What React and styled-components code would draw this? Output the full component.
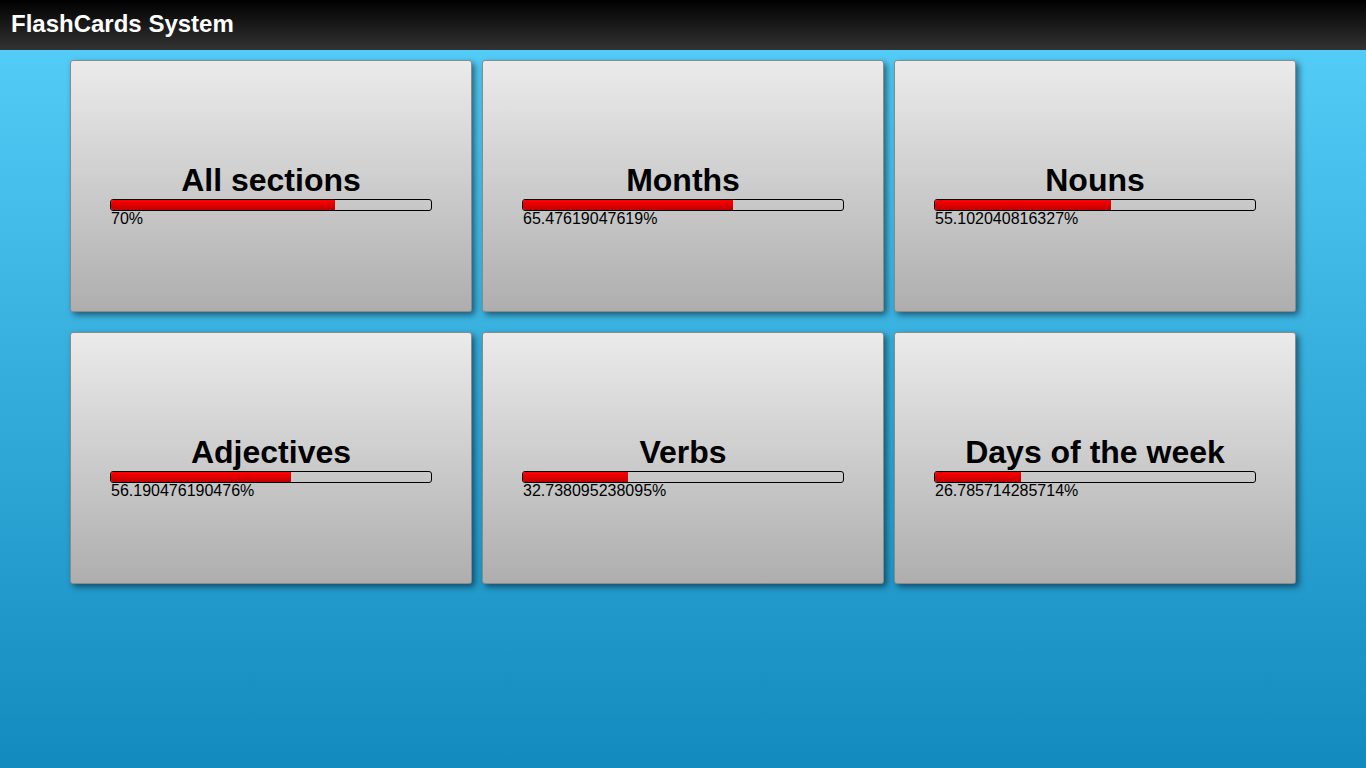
import React from "react";
import styled, { createGlobalStyle } from "styled-components";

const GlobalStyle = createGlobalStyle`
  html, body {
    margin: 0;
    padding: 0;
    height: 100%;
  }
  body {
    font-family: "Liberation Sans", Arial, sans-serif;
    background: linear-gradient(to bottom, #57d0fb 0%, #138abd 100%);
    min-height: 768px;
  }
`;

const Page = styled.div`
  min-height: 768px;
  display: flex;
  flex-direction: column;
`;

const Header = styled.header`
  height: 50px;
  background: linear-gradient(to bottom, #000000 0%, #333333 100%);
  display: flex;
  align-items: center;
  padding: 0 11px;
`;

const Title = styled.h1`
  margin: 0;
  color: #ffffff;
  font-size: 24px;
  font-weight: bold;
  font-family: "Liberation Sans", Arial, sans-serif;
  line-height: 1;
  padding-bottom: 2px;
`;

const Grid = styled.main`
  display: grid;
  grid-template-columns: repeat(3, 402px);
  column-gap: 10px;
  row-gap: 20px;
  justify-content: center;
  padding-top: 10px;
`;

const Card = styled.div`
  box-sizing: border-box;
  height: 252px;
  border: 1px solid #8a8a8a;
  border-radius: 3px;
  background: linear-gradient(to bottom, #ebebeb 0%, #aeaeae 100%);
  box-shadow: 3px 3px 6px rgba(0, 0, 0, 0.5);
  display: flex;
  flex-direction: column;
  align-items: center;
  padding-top: 101px;
  cursor: pointer;
`;

const CardTitle = styled.h2`
  margin: 0;
  font-size: 32px;
  font-weight: bold;
  line-height: 37px;
  color: #000;
  text-align: center;
`;

const Progress = styled.div`
  width: 320px;
  display: flex;
  flex-direction: column;
`;

const Bar = styled.div`
  box-sizing: border-box;
  width: 322px;
  margin-left: -1px;
  height: 12px;
  border: 1px solid #000;
  border-radius: 3px;
  overflow: hidden;
`;

const Fill = styled.div`
  height: 100%;
  background: linear-gradient(to bottom, #ff0000 0%, #c00000 100%);
`;

const Percent = styled.div`
  font-size: 16px;
  line-height: 16px;
  color: #000;
`;

const sections = [
  { name: "All sections", value: "70" },
  { name: "Months", value: "65.47619047619" },
  { name: "Nouns", value: "55.102040816327" },
  { name: "Adjectives", value: "56.190476190476" },
  { name: "Verbs", value: "32.738095238095" },
  { name: "Days of the week", value: "26.785714285714" },
];

export default function App() {
  return (
    <>
      <GlobalStyle />
      <Page>
        <Header>
          <Title>FlashCards System</Title>
        </Header>
        <Grid>
          {sections.map((s) => (
            <Card key={s.name}>
              <CardTitle>{s.name}</CardTitle>
              <Progress>
                <Bar>
                  <Fill style={{ width: `${parseFloat(s.value)}%` }} />
                </Bar>
                <Percent>{s.value}%</Percent>
              </Progress>
            </Card>
          ))}
        </Grid>
      </Page>
    </>
  );
}
